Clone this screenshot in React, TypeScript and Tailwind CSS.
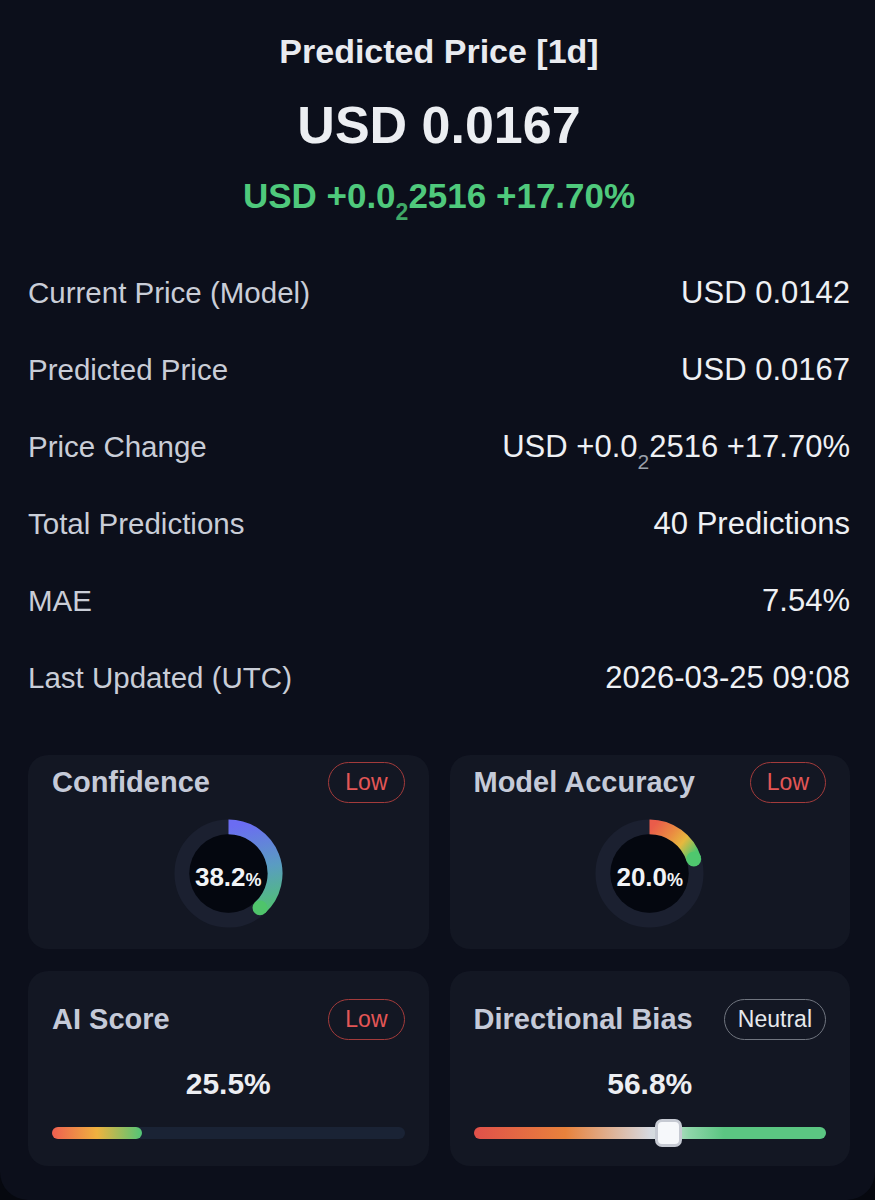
import React from "react";

type Stop = { o: number; c: string };

function Gauge({
  value,
  id,
  stops,
  g,
  endColor,
}: {
  value: number;
  id: string;
  stops: Stop[];
  g: { x1: number; y1: number; x2: number; y2: number };
  endColor: string;
}) {
  const r = 47;
  const c = 55;
  const a = (value / 100) * 2 * Math.PI;
  const ex = c + r * Math.sin(a);
  const ey = c - r * Math.cos(a);
  const large = value > 50 ? 1 : 0;
  const [whole, frac] = value.toFixed(1).split(".");
  return (
    <div className="relative h-[109px] w-[109px]">
      <svg viewBox="0 0 110 110" className="h-full w-full">
        <defs>
          <linearGradient id={id} gradientUnits="userSpaceOnUse" x1={g.x1} y1={g.y1} x2={g.x2} y2={g.y2}>
            {stops.map((s) => (
              <stop key={s.o} offset={s.o} stopColor={s.c} />
            ))}
          </linearGradient>
        </defs>
        <circle cx={c} cy={c} r={r} fill="none" stroke="#1b2030" strokeWidth={15} />
        <circle cx={c} cy={c} r={39.5} fill="#04070f" />
        <path
          d={`M ${c} ${c - r} A ${r} ${r} 0 ${large} 1 ${ex} ${ey}`}
          stroke={`url(#${id})`}
          strokeWidth={15}
          fill="none"
        />
        <circle cx={ex} cy={ey} r={7.5} fill={endColor} />
      </svg>
      <div className="absolute inset-0 flex translate-y-[3px] items-center justify-center">
        <div className="flex items-baseline text-[#f1f3f6]">
          <span className="text-[26px] font-bold leading-none">
            {whole}.{frac}
          </span>
          <span className="text-[18px] font-bold leading-none">%</span>
        </div>
      </div>
    </div>
  );
}

function Badge({ label, tone }: { label: string; tone: "red" | "gray" }) {
  if (tone === "red") {
    return (
      <span className="flex h-[41px] items-center rounded-full border-[1.5px] border-[#a33b3b] px-[16px] text-[23px] text-[#e35656]">
        {label}
      </span>
    );
  }
  return (
    <span className="flex h-[41px] items-center rounded-full border-[1.5px] border-[#70757f] px-[13px] text-[23px] text-[#e6e8ec]">
      {label}
    </span>
  );
}

function Header({ title, badge, tone }: { title: string; badge: string; tone: "red" | "gray" }) {
  return (
    <div className="flex h-[41px] items-center justify-between">
      <span className="text-[29px] font-bold text-[#c5cad8]">{title}</span>
      <Badge label={badge} tone={tone} />
    </div>
  );
}

const rows: [string, React.ReactNode][] = [
  ["Current Price (Model)", "USD 0.0142"],
  ["Predicted Price", "USD 0.0167"],
  [
    "Price Change",
    <>
      USD +0.0
      <span className="relative top-[12px] text-[21px] text-[#9aa0ab]">2</span>
      2516 +17.70%
    </>,
  ],
  ["Total Predictions", "40 Predictions"],
  ["MAE", "7.54%"],
  ["Last Updated (UTC)", "2026-03-25 09:08"],
];

export default function App() {
  return (
    <div className="min-h-[1200px] bg-[#06080f] font-['Liberation_Sans',Arial,sans-serif]">
      <div className="min-h-[1200px] rounded-b-[28px] bg-[#0c0f1b] pl-[28px] pr-[25px] pt-[31px]">
        <h1 className="text-center text-[34px] font-bold leading-[40px] text-[#e9ebf0]">Predicted Price [1d]</h1>
        <div className="mt-[24px] text-center text-[52px] font-bold leading-[60px] text-[#eceef2]">USD 0.0167</div>
        <div className="mt-[19px] text-center text-[35px] font-bold leading-[44px] text-[#4fc97c]">
          USD +0.0
          <span className="relative top-[12px] text-[23px] text-[#3fa866]">2</span>
          2516 +17.70%
        </div>

        <div className="mt-[33px]">
          {rows.map(([label, value]) => (
            <div key={label} className="flex h-[77px] items-center justify-between">
              <span className="text-[29.5px] text-[#c9cdd7]">{label}</span>
              <span className="text-[31px] text-[#eef0f4]">{value}</span>
            </div>
          ))}
        </div>

        <div className="mt-[38px] grid grid-cols-2 gap-x-[21px] gap-y-[22px]">
          <div className="rounded-[20px] bg-[#131723] px-6 pb-[21px] pt-[7px]">
            <Header title="Confidence" badge="Low" tone="red" />
            <div className="mt-[16px] flex justify-center">
              <Gauge
                value={38.2}
                id="gConf"
                g={{ x1: 55, y1: 8, x2: 75, y2: 100 }}
                stops={[
                  { o: 0, c: "#6b6cf2" },
                  { o: 0.5, c: "#5a9cc2" },
                  { o: 1, c: "#4fc46b" },
                ]}
                endColor="#4fc46b"
              />
            </div>
          </div>

          <div className="rounded-[20px] bg-[#131723] px-6 pb-[21px] pt-[7px]">
            <Header title="Model Accuracy" badge="Low" tone="red" />
            <div className="mt-[16px] flex justify-center">
              <Gauge
                value={20.0}
                id="gAcc"
                g={{ x1: 58, y1: 8, x2: 100, y2: 42 }}
                stops={[
                  { o: 0, c: "#ea5c4a" },
                  { o: 0.35, c: "#ea8a42" },
                  { o: 0.62, c: "#e7b83e" },
                  { o: 0.92, c: "#4fc76e" },
                  { o: 1, c: "#4fc76e" },
                ]}
                endColor="#4fc76e"
              />
            </div>
          </div>

          <div className="rounded-[20px] bg-[#131723] px-6 pb-[19px] pt-[28px]">
            <Header title="AI Score" badge="Low" tone="red" />
            <div className="mt-[26px] text-center text-[30px] font-bold leading-[36px] text-[#eceef2]">25.5%</div>
            <div className="mt-[17px] flex h-[28px] items-center">
              <div className="relative h-[12px] w-full rounded-full bg-[#1a2335]">
                <div className="absolute inset-y-0 left-0 w-[25.5%] rounded-full bg-[linear-gradient(to_right,#ee5f50,#efb23f_50%,#52c577)]" />
              </div>
            </div>
          </div>

          <div className="rounded-[20px] bg-[#131723] px-6 pb-[19px] pt-[28px]">
            <Header title="Directional Bias" badge="Neutral" tone="gray" />
            <div className="mt-[26px] text-center text-[30px] font-bold leading-[36px] text-[#eceef2]">56.8%</div>
            <div className="relative mt-[17px] flex h-[28px] items-center">
              <div className="h-[12px] w-full rounded-full bg-[linear-gradient(to_right,#e0504a_0%,#e8823c_26%,#d6d9e0_50%,#cfe0d8_55%,#8fd6aa_61%,#5bc682_71%,#5bc682_100%)]" />
              <div className="absolute top-0 left-[calc(55.2%-13.5px)] h-[28px] w-[27px] rounded-[7px] border-[3px] border-[#c6cad3] bg-[#f6f8fb]" />
            </div>
          </div>
        </div>
      </div>
    </div>
  );
}
